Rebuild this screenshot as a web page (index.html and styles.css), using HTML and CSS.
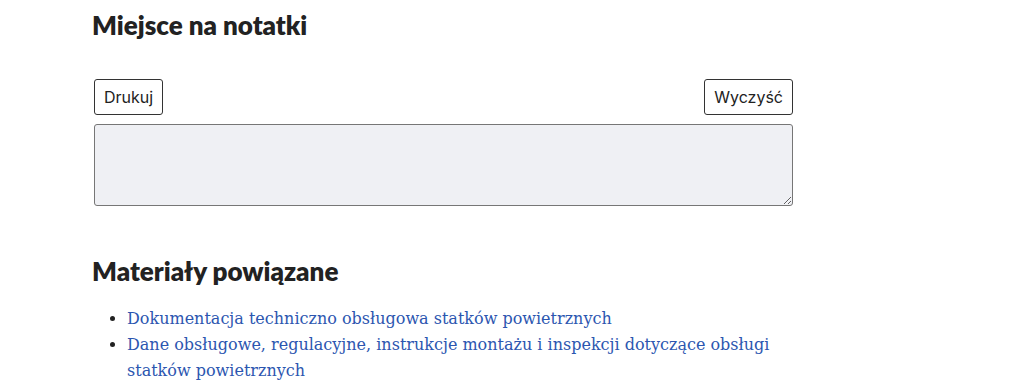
FILE: index.html
```html
<!DOCTYPE html>
<html lang="pl">
<head>
  <meta charset="UTF-8">
  <meta name="viewport" content="width=device-width, initial-scale=1.0">
  <title>Miejsce na notatki</title>
  <link rel="stylesheet" href="styles.css">
</head>
<body>
  <main class="content">
    <section class="notes">
      <h2>Miejsce na notatki</h2>
      <div class="notes-actions">
        <button type="button" class="btn" id="print-btn">Drukuj</button>
        <button type="button" class="btn" id="clear-btn">Wyczyść</button>
      </div>
      <textarea class="notes-area" id="notes" aria-label="Notatki"></textarea>
    </section>

    <section class="related">
      <h2>Materiały powiązane</h2>
      <ul class="related-list">
        <li><a href="#">Dokumentacja techniczno obsługowa statków powietrznych</a></li>
        <li><a href="#">Dane obsługowe, regulacyjne, instrukcje montażu i inspekcji dotyczące obsługi statków powietrznych</a></li>
      </ul>
    </section>
  </main>
</body>
</html>
```

FILE: styles.css
```css
:root {
  --text: #222222;
  --link: #2c56b0;
  --field: #eff0f4;
  --field-border: #767676;
}

* {
  margin: 0;
  padding: 0;
  box-sizing: border-box;
}

body {
  font-family: 'Lato', sans-serif;
  color: var(--text);
  background: #ffffff;
}

.content {
  width: 699px;
  margin-left: 94px;
  padding-top: 10px;
}

h2 {
  font-size: 26px;
  font-weight: 800;
  line-height: 31px;
  margin-left: -2px;
}

.notes-actions {
  display: flex;
  justify-content: space-between;
  margin-top: 38px;
  margin-bottom: 9px;
}

.btn {
  font-family: 'Inter', sans-serif;
  font-size: 16px;
  color: var(--text);
  background: #ffffff;
  border: 1px solid #333333;
  border-radius: 3px;
  height: 36px;
  padding: 0 9px;
  cursor: pointer;
}

.notes-area {
  display: block;
  width: 699px;
  height: 82px;
  background: var(--field);
  border: 1px solid var(--field-border);
  border-radius: 3px;
  font-family: 'Inter', sans-serif;
  font-size: 16px;
  padding: 6px 8px;
}

.related {
  margin-top: 50px;
}

.related-list {
  margin-top: 19px;
  padding-left: 33px;
  font-family: 'DejaVu Serif', serif;
  font-size: 16px;
  line-height: 26px;
}

.related-list a {
  color: var(--link);
  text-decoration: none;
}
```
